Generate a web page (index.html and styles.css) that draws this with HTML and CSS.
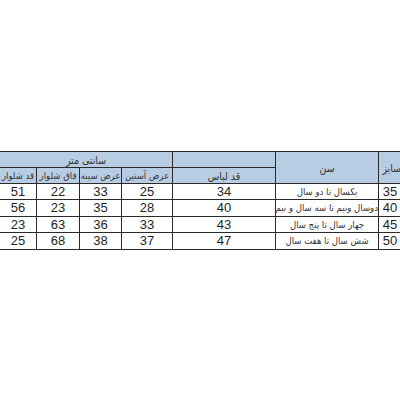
FILE: index.html
```html
<!DOCTYPE html>
<html lang="fa">
<head>
<meta charset="utf-8">
<link rel="stylesheet" href="styles.css">
</head>
<body>
<div class="page">
<table class="sizes" dir="rtl">
  <colgroup>
    <col class="c-size"><col class="c-age"><col class="c-len"><col class="c-sleeve"><col class="c-chest"><col class="c-rise"><col class="c-pants">
  </colgroup>
  <thead>
    <tr class="h1">
      <th rowspan="2" class="th-size big">سایز</th>
      <th rowspan="2" class="big">سن</th>
      <th class="th-blank"></th>
      <th colspan="4" class="big">سانتی متر</th>
    </tr>
    <tr class="h2">
      <th class="big">قد لباس</th>
      <th>عرض آستین</th>
      <th>عرض سینه</th>
      <th>فاق شلوار</th>
      <th>قد شلوار</th>
    </tr>
  </thead>
  <tbody>
    <tr class="r1"><td class="num">35</td><td class="age">یکسال تا دو سال</td><td class="num">34</td><td class="num">25</td><td class="num">33</td><td class="num">22</td><td class="num">51</td></tr>
    <tr class="r2"><td class="num">40</td><td class="age">دوسال ونیم تا سه سال و نیم</td><td class="num">40</td><td class="num">28</td><td class="num">35</td><td class="num">23</td><td class="num">56</td></tr>
    <tr class="r1"><td class="num">45</td><td class="age">چهار سال تا پنج سال</td><td class="num">43</td><td class="num">33</td><td class="num">36</td><td class="num">63</td><td class="num">23</td></tr>
    <tr class="r2"><td class="num">50</td><td class="age">شش سال تا هفت سال</td><td class="num">47</td><td class="num">37</td><td class="num">38</td><td class="num">68</td><td class="num">25</td></tr>
  </tbody>
</table>
</div>
</body>
</html>
```

FILE: styles.css
```css
html, body {
  margin: 0;
  padding: 0;
  background: #ffffff;
  overflow: hidden;
}
.page {
  width: 400px;
  height: 400px;
  overflow: hidden;
  padding-top: 151px;
  box-sizing: border-box;
}
.sizes {
  border-collapse: collapse;
  table-layout: fixed;
  width: 402px;
  margin-left: -1px;
  font-family: "Liberation Sans", "DejaVu Sans", sans-serif;
  color: #1f1f1f;
}
.c-size { width: 23px; }
.c-age { width: 103px; }
.c-len { width: 103px; }
.c-sleeve { width: 51px; }
.c-chest { width: 42px; }
.c-rise { width: 43px; }
.c-pants { width: 37px; }

.sizes th, .sizes td {
  border: 1px solid #2a2a2a;
  padding: 0;
  overflow: hidden;
  white-space: nowrap;
  line-height: 14px;
}
.sizes th {
  background: #b8cce4;
  font-family: "DejaVu Sans Condensed", "DejaVu Sans", sans-serif;
  font-stretch: condensed;
  font-weight: normal;
  font-size: 9.5px;
  text-align: center;
  color: #333;
}
.sizes th.big { font-size: 10.5px; }
.sizes th.th-size { text-align: right; }
.h1 { height: 16px; }
.h2 { height: 16px; }
.r1 { height: 16px; }
.r2 { height: 17px; }
.sizes td.num {
  font-size: 13px;
  text-align: center;
}
.sizes td.age {
  font-family: "DejaVu Sans Condensed", "DejaVu Sans", sans-serif;
  font-stretch: condensed;
  font-size: 9.5px;
  text-align: center;
  color: #333;
}
```
